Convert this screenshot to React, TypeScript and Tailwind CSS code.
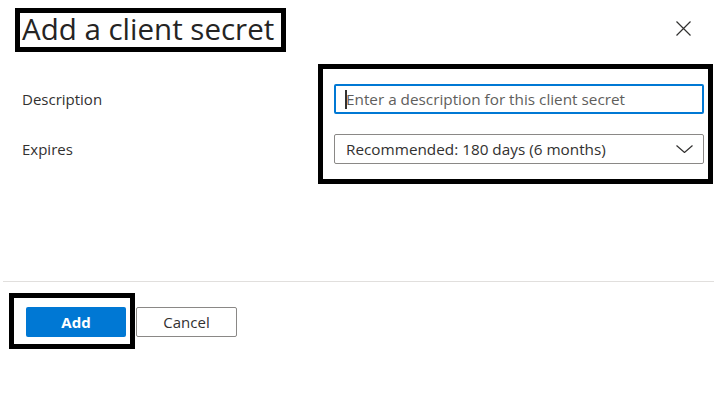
import React from "react";

export default function App() {
  return (
    <div className="w-[714px] h-[398px] bg-white overflow-hidden text-[#323130]" style={{ fontFamily: '"Open Sans", "Noto Sans", sans-serif' }}>
      {/* Header */}
      <div className="flex items-start justify-between pt-[8px] pl-[15px] pr-[23px]">
        <div className="w-[271px] h-[44px] border-[5px] border-black flex items-center pl-[2px]">
          <h1 className="text-[29.5px] leading-none font-normal text-[#252423] whitespace-nowrap -mt-[2px]">Add a client secret</h1>
        </div>
        <button className="mt-[13px] w-[15px] h-[15px] flex items-center justify-center text-[#323130]" aria-label="Close">
          <svg width="15" height="15" viewBox="0 0 15 15" fill="none" stroke="currentColor" strokeWidth="1.2">
            <path d="M0.5 0.5 L14.5 14.5 M14.5 0.5 L0.5 14.5" />
          </svg>
        </button>
      </div>

      {/* Form */}
      <div className="flex mt-[12px]">
        <div className="w-[318px] pl-[22px] pt-[20px] text-[15px] text-[#323130]">
          <div className="h-[30px] flex items-center">Description</div>
          <div className="h-[30px] flex items-center mt-[20px]">Expires</div>
        </div>
        <div className="w-[395px] border-[5px] border-black pt-[15px] pb-[15px] pl-[11px] pr-[4px]">
          <div className="relative h-[30px] border-2 border-[#0078d4] rounded-[2px] flex items-center pl-[10px]">
            <span className="absolute left-[9px] top-[4px] w-[2px] h-[19px] bg-[#323130]" />
            <span className="text-[15.3px] text-[#605e5c] whitespace-nowrap">Enter a description for this client secret</span>
          </div>
          <div className="h-[30px] mt-[20px] border border-[#8a8886] rounded-[2px] flex items-center justify-between pl-[11px] pr-[10px]">
            <span className="text-[15.3px] text-[#323130] whitespace-nowrap">Recommended: 180 days (6 months)</span>
            <svg width="17" height="8" viewBox="0 0 17 8" fill="none" stroke="#323130" strokeWidth="1.2">
              <path d="M0.5 0.5 L8.5 7.5 L16.5 0.5" />
            </svg>
          </div>
        </div>
      </div>

      {/* Divider */}
      <div className="ml-[3px] mt-[97px] h-px bg-[#e1dfdd]" />

      {/* Footer */}
      <div className="flex items-start mt-[11px] pl-[9px]">
        <div className="w-[126px] h-[56px] border-[5px] border-black pl-[12px] pt-[9px]">
          <button className="w-[100px] h-[30px] bg-[#0078d4] rounded-[2px] text-white text-[15px] font-bold flex items-center justify-center">Add</button>
        </div>
        <button className="mt-[14px] ml-[1px] w-[101px] h-[30px] border border-[#8a8886] rounded-[2px] bg-white text-[15px] font-medium text-[#323130] flex items-center justify-center">Cancel</button>
      </div>
    </div>
  );
}
